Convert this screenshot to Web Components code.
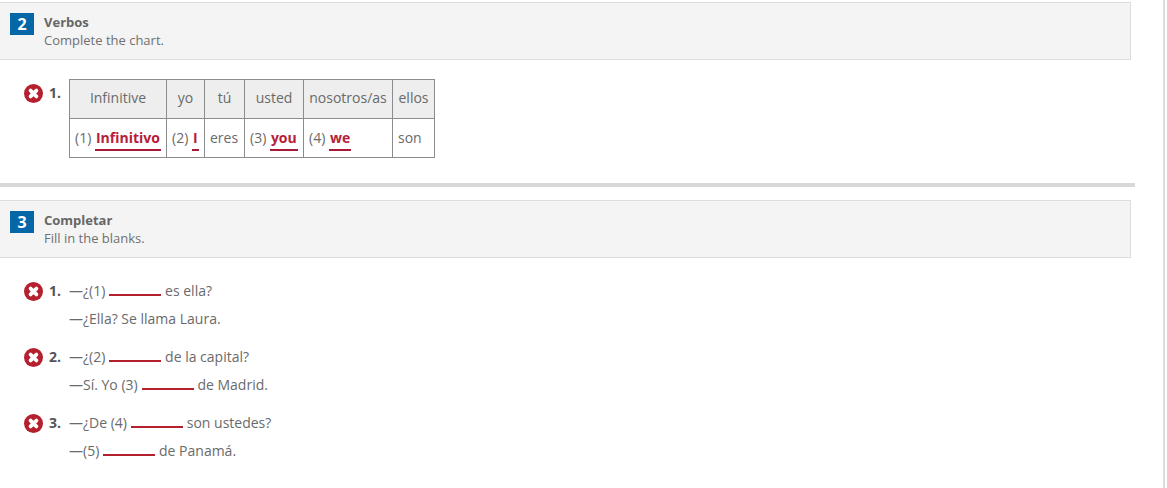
<!DOCTYPE html>
<html>
<head>
<meta charset="utf-8">
<style>
  html, body { margin: 0; background: #fff; }
  body { font-family: "Open Sans", sans-serif; font-size: 14px; color: #666; overflow: hidden; }
</style>
</head>
<body>
<quiz-page>
  <quiz-section num="2" title="Verbos" desc="Complete the chart.">
    <quiz-item num="1." chart>
      <verb-chart></verb-chart>
    </quiz-item>
  </quiz-section>
  <quiz-rule></quiz-rule>
  <quiz-section num="3" title="Completar" desc="Fill in the blanks.">
    <quiz-item num="1.">
      <p-line>—¿(1) <quiz-blank></quiz-blank> es ella?</p-line>
      <p-line>—¿Ella? Se llama Laura.</p-line>
    </quiz-item>
    <quiz-item num="2.">
      <p-line>—¿(2) <quiz-blank></quiz-blank> de la capital?</p-line>
      <p-line>—Sí. Yo (3) <quiz-blank></quiz-blank> de Madrid.</p-line>
    </quiz-item>
    <quiz-item num="3.">
      <p-line>—¿De (4) <quiz-blank></quiz-blank> son ustedes?</p-line>
      <p-line>—(5) <quiz-blank></quiz-blank> de Panamá.</p-line>
    </quiz-item>
  </quiz-section>
</quiz-page>

<script>
// small helper so each element just declares its shadow markup
class Base extends HTMLElement {
  constructor() {
    super();
    this.attachShadow({ mode: 'open' });
  }
  connectedCallback() {
    this.shadowRoot.innerHTML = this.markup();
  }
}

class QuizPage extends Base {
  markup() {
    return `
      <style>
        :host { display: block; width: 1163px; height: 486px; border-right: 2px solid #ddd; padding-top: 2px; }
        .col { width: 1135px; }
      </style>
      <div class="col"><slot></slot></div>`;
  }
}

class QuizSection extends Base {
  markup() {
    const num = this.getAttribute('num');
    const title = this.getAttribute('title');
    const desc = this.getAttribute('desc');
    return `
      <style>
        :host { display: block; }
        .head {
          width: 1131px; height: 58px; box-sizing: border-box;
          display: flex; gap: 10px; padding: 10px 0 0 10px;
          background: #f4f4f4; border: 1px solid #ddd; border-left: 0;
        }
        .num {
          width: 24px; height: 22px; background: #0667a8; color: #fff;
          font-weight: 700; font-size: 16px; line-height: 22px; text-align: center;
        }
        .title { font-weight: 700; font-size: 13px; line-height: 18px; color: #666; }
        .desc { font-size: 13px; line-height: 18px; color: #707070; }
        .body { padding-top: 19px; }
      </style>
      <div class="head">
        <div class="num">${num}</div>
        <div><div class="title">${title}</div><div class="desc">${desc}</div></div>
      </div>
      <div class="body"><slot></slot></div>`;
  }
}

class QuizItem extends Base {
  markup() {
    const num = this.getAttribute('num');
    return `
      <style>
        :host { display: flex; padding-left: 24px; margin-bottom: 10px; }
        svg { width: 19px; height: 19px; flex: none; margin-top: 5px; }
        .num { width: 26px; flex: none; padding-left: 6px; box-sizing: border-box; font-weight: 700; font-size: 14px; line-height: 28px; color: #555; }
      </style>
      <svg viewBox="0 0 19 19" aria-hidden="true">
        <circle cx="9.5" cy="9.5" r="9.5" fill="#b5202f"/>
        <path d="M6.6 6.6l5.8 5.8M12.4 6.6l-5.8 5.8" stroke="#fff" stroke-width="3.8" stroke-linecap="round"/>
      </svg>
      <div class="num">${num}</div>
      <div><slot></slot></div>`;
  }
}

class PLine extends Base {
  markup() {
    return `
      <style>
        :host { display: block; height: 28px; line-height: 28px; font-size: 14px; white-space: nowrap; color: #6a6a6a; }
      </style>
      <slot></slot>`;
  }
}

class QuizBlank extends Base {
  markup() {
    return `
      <style>
        :host { display: inline-block; width: 52px; height: 2px; background: #b5202f; vertical-align: 0; margin: 0 .1px 0 .4px; }
      </style>`;
  }
}

class QuizRule extends Base {
  markup() {
    return `
      <style>
        :host { display: block; height: 4px; background: #d8d8d8; margin: 25px 0 13px; }
      </style>`;
  }
}

class VerbChart extends Base {
  markup() {
    const ans = t => `<span class="ans">${t}</span>`;
    const widths = [97, 38, 40, 59, 89, 42];
    return `
      <style>
        :host { display: block; }
        table { border-collapse: collapse; table-layout: fixed; width: 365px; font-size: 14px; line-height: 20px; color: #6a6a6a; }
        td, th { border: 1px solid #8c8c8c; height: 39px; padding: 0 5px; font-weight: 400; white-space: nowrap; box-sizing: border-box; }
        th { background: #eee; text-align: center; padding-bottom: 2px; }
        td { text-align: left; }
        .ans { font-weight: 700; color: #b5203a; border-bottom: 2px solid #a61c37; padding: 0 1px 2px; }
      </style>
      <table>
        <colgroup>${widths.map(w => `<col style="width:${w}px">`).join('')}</colgroup>
        <tr><th>Infinitive</th><th>yo</th><th>tú</th><th>usted</th><th>nosotros/as</th><th>ellos</th></tr>
        <tr><td>(1) ${ans('Infinitivo')}</td><td>(2) ${ans('I')}</td><td>eres</td><td>(3) ${ans('you')}</td><td>(4) ${ans('we')}</td><td>son</td></tr>
      </table>`;
  }
}

customElements.define('quiz-page', QuizPage);
customElements.define('quiz-section', QuizSection);
customElements.define('quiz-item', QuizItem);
customElements.define('p-line', PLine);
customElements.define('quiz-blank', QuizBlank);
customElements.define('quiz-rule', QuizRule);
customElements.define('verb-chart', VerbChart);
</script>
</body>
</html>
